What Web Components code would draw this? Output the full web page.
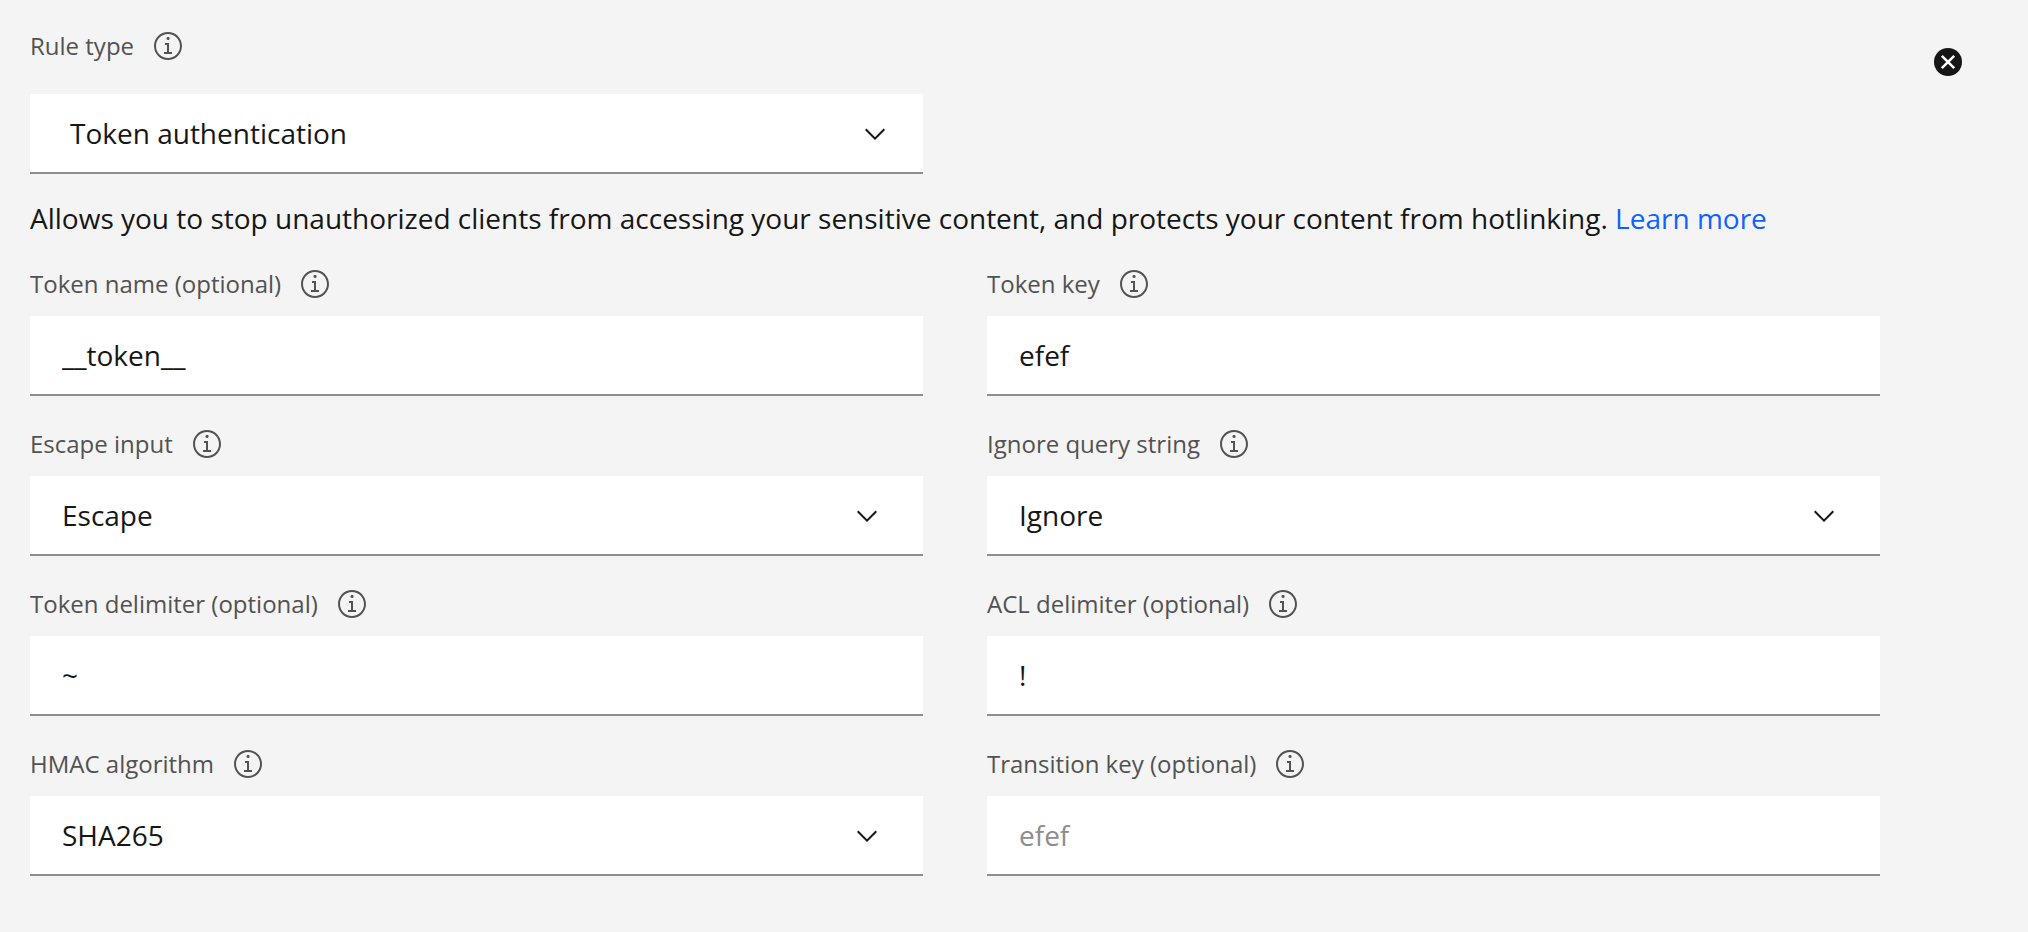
<!DOCTYPE html>
<html lang="en">
<head>
<meta charset="utf-8">
<title>Token authentication rule</title>
<style>
  body {
    margin: 0;
    background: #f4f4f4;
    color: #161616;
    font-family: "Open Sans", "Noto Sans", sans-serif;
    font-size: 28px;
    line-height: 40px;
  }
</style>
</head>
<body>
<rule-panel>
  <select-field slot="type" inset value="Token authentication">Rule type</select-field>
  <rule-description slot="description" href="#learn-more" link="Learn more">Allows you to stop unauthorized clients from accessing your sensitive content, and protects your content from hotlinking.</rule-description>
  <text-field value="__token__">Token name (optional)</text-field>
  <text-field value="efef">Token key</text-field>
  <select-field value="Escape">Escape input</select-field>
  <select-field value="Ignore">Ignore query string</select-field>
  <text-field value="~">Token delimiter (optional)</text-field>
  <text-field value="!">ACL delimiter (optional)</text-field>
  <select-field value="SHA265">HMAC algorithm</select-field>
  <text-field placeholder="efef">Transition key (optional)</text-field>
</rule-panel>

<script>
  const fieldStyles = `
    :host { display: block; min-width: 0; }
    .head { display: flex; align-items: center; gap: 18px; margin-bottom: var(--label-gap, 16px); }
    label { color: #525252; font-size: 24px; line-height: 32px; }
    input, select {
      display: block;
      box-sizing: border-box;
      width: 100%;
      height: 80px;
      margin: 0;
      padding: 0 32px;
      border: 0;
      border-bottom: 2px solid #8d8d8d;
      border-radius: 0;
      background: #fff;
      color: #161616;
      font-family: inherit;
      font-size: 28px;
      appearance: none;
    }
    input:focus, select:focus { outline: 4px solid #0f62fe; outline-offset: -4px; }
    input::placeholder { color: #8d8d8d; opacity: 1; }
  `;

  /* Information button beside each label */
  customElements.define('info-button', class extends HTMLElement {
    constructor() {
      super();
      this.attachShadow({ mode: 'open' }).innerHTML = `
        <style>
          :host { display: block; flex: none; }
          button { display: block; margin: 0; padding: 0; border: 0; background: none; color: #525252; cursor: pointer; }
          svg { display: block; width: 32px; height: 32px; fill: currentColor; }
        </style>
        <button type="button" aria-label="More information">
          <svg viewBox="0 0 16 16" aria-hidden="true">
            <path d="M8.5 11V6.5h-2v1h1V11H6v1h4v-1zM8 3.5c-.4 0-.8.3-.8.8S7.6 5 8 5s.8-.3.8-.8S8.4 3.5 8 3.5z"/>
            <path d="M8 15c-3.9 0-7-3.1-7-7s3.1-7 7-7 7 3.1 7 7-3.1 7-7 7zM8 2C4.7 2 2 4.7 2 8s2.7 6 6 6 6-2.7 6-6-2.7-6-6-6z"/>
          </svg>
        </button>`;
    }
  });

  customElements.define('text-field', class extends HTMLElement {
    constructor() {
      super();
      this.attachShadow({ mode: 'open' }).innerHTML = `
        <style>${fieldStyles}</style>
        <div class="head"><label for="control"><slot></slot></label><info-button></info-button></div>
        <input id="control" type="text">`;
    }
    connectedCallback() {
      const input = this.shadowRoot.querySelector('input');
      input.value = this.getAttribute('value') || '';
      input.placeholder = this.getAttribute('placeholder') || '';
    }
  });

  customElements.define('select-field', class extends HTMLElement {
    constructor() {
      super();
      this.attachShadow({ mode: 'open' }).innerHTML = `
        <style>
          ${fieldStyles}
          .box { display: grid; align-items: center; }
          select, svg { grid-area: 1 / 1; }
          svg { justify-self: end; width: 32px; height: 32px; margin-right: 40px; fill: #161616; pointer-events: none; }
          :host([inset]) { --label-gap: 32px; }
          :host([inset]) select { padding: 0 40px; }
          :host([inset]) svg { margin-right: 32px; }
        </style>
        <div class="head"><label for="control"><slot></slot></label><info-button></info-button></div>
        <div class="box">
          <select id="control"></select>
          <svg viewBox="0 0 16 16" aria-hidden="true"><path d="M8 11 3 6l.7-.7L8 9.6l4.3-4.3.7.7z"/></svg>
        </div>`;
    }
    connectedCallback() {
      const value = this.getAttribute('value');
      this.shadowRoot.querySelector('select').replaceChildren(new Option(value, value, true, true));
    }
  });

  customElements.define('rule-description', class extends HTMLElement {
    constructor() {
      super();
      this.attachShadow({ mode: 'open' }).innerHTML = `
        <style>
          :host { display: block; }
          p { margin: 0; }
          a { color: #0f62fe; text-decoration: none; }
          a:hover { text-decoration: underline; }
        </style>
        <p><slot></slot> <a></a></p>`;
    }
    connectedCallback() {
      const link = this.shadowRoot.querySelector('a');
      link.href = this.getAttribute('href');
      link.textContent = this.getAttribute('link');
    }
  });

  customElements.define('close-button', class extends HTMLElement {
    constructor() {
      super();
      this.attachShadow({ mode: 'open' }).innerHTML = `
        <style>
          :host { display: block; }
          button { display: block; margin: 0; padding: 0; border: 0; background: none; color: #161616; cursor: pointer; }
          svg { display: block; width: 32px; height: 32px; fill: currentColor; }
        </style>
        <button type="button" aria-label="Remove rule">
          <svg viewBox="0 0 16 16" aria-hidden="true">
            <circle cx="8" cy="8" r="7"/>
            <path d="m4.9 4.9 6.2 6.2m0-6.2-6.2 6.2" fill="none" stroke="#fff" stroke-width="1.3"/>
          </svg>
        </button>`;
    }
  });

  customElements.define('rule-panel', class extends HTMLElement {
    constructor() {
      super();
      this.attachShadow({ mode: 'open' }).innerHTML = `
        <style>
          :host { display: flex; align-items: flex-start; gap: 52px; padding: 30px 64px 54px 30px; }
          form { flex: 1; min-width: 0; }
          .grid { display: grid; grid-template-columns: repeat(2, minmax(0, 1fr)); gap: 32px 64px; }
          .description { margin: 24px 0 30px; }
          close-button { flex: none; margin-top: 16px; }
        </style>
        <form>
          <div class="grid"><slot name="type"></slot></div>
          <div class="description"><slot name="description"></slot></div>
          <div class="grid"><slot></slot></div>
        </form>
        <close-button></close-button>`;
    }
  });
</script>
</body>
</html>
